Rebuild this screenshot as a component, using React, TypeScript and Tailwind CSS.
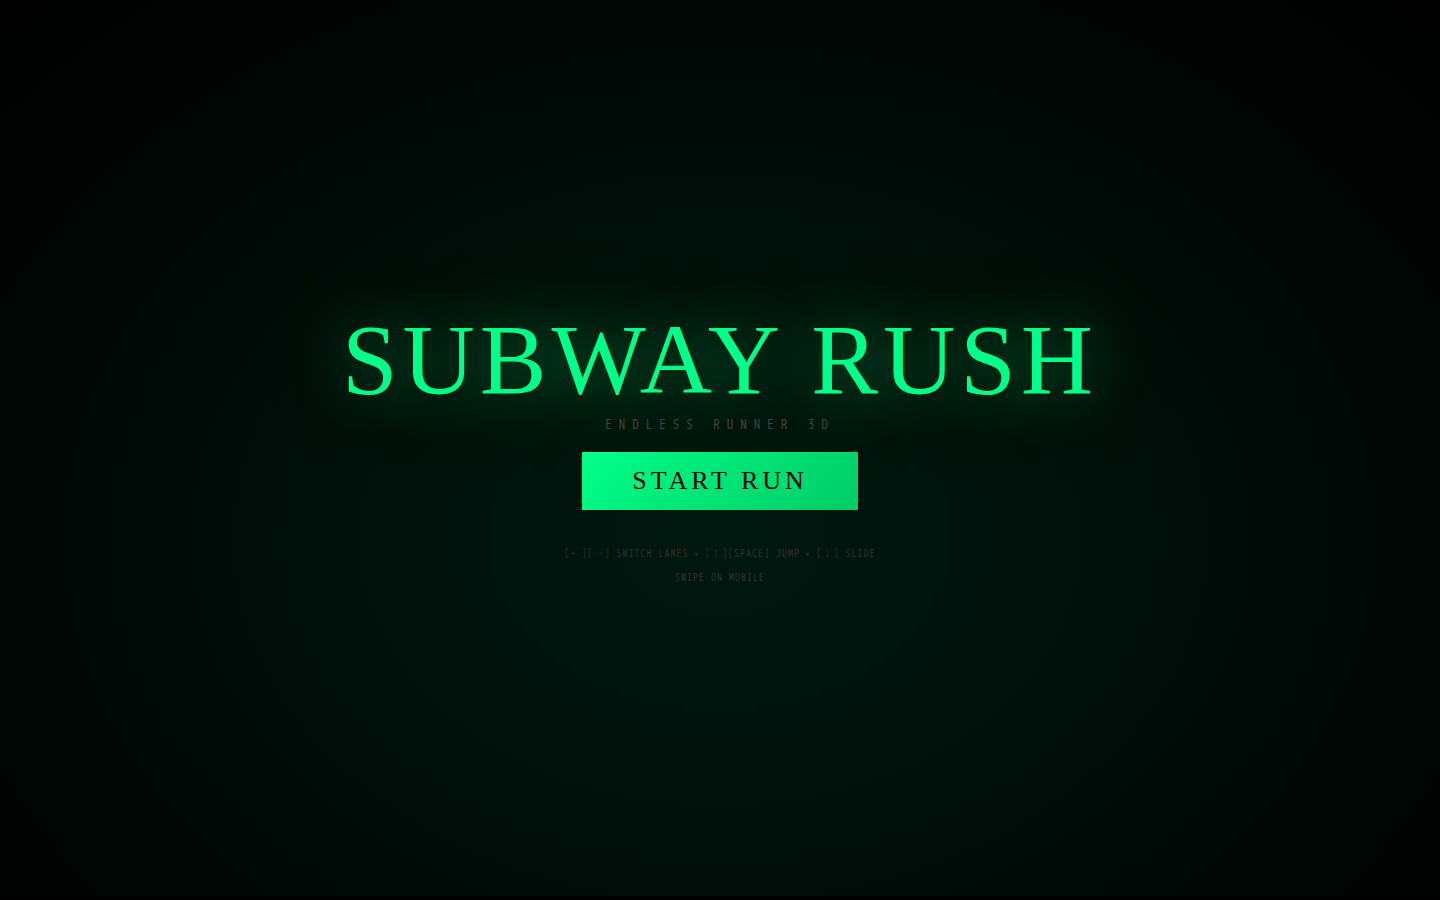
export default function App() {
  return (
    <main className="flex h-screen flex-col bg-black pb-1">
      <div className="flex flex-1 flex-col items-center justify-center bg-[radial-gradient(ellipse_at_50%_60%,#001810_0%,#000_100%)] text-center">
        <h1 className="my-1 font-['Liberation_Serif',serif] text-[100px] leading-[100px] tracking-[5px] text-[#00ff88] [text-shadow:0_0_60px_#00ff8873,0_0_120px_#00ff8840]">
          SUBWAY RUSH
        </h1>
        <p className="mb-4 font-['WenQuanYi_Zen_Hei_Mono','Noto_Sans_Mono_CJK_JP',monospace] text-[13px] leading-[22px] tracking-[7px] text-[#444]">ENDLESS RUNNER 3D</p>
        <button type="button" className="bg-linear-135 from-[#00ff88] to-[#00cc66] px-[50px] py-3.5 font-['Liberation_Serif',serif] text-[26px] leading-[30px] tracking-[4px] text-black">
          START RUN
        </button>
        <p className="mt-8 font-['WenQuanYi_Zen_Hei_Mono','Noto_Sans_Mono_CJK_JP',monospace] text-[10px] leading-6 tracking-[1px] text-[#333]">
          [←][→] SWITCH LANES • [↑][SPACE] JUMP • [↓] SLIDE
          <br />
          SWIPE ON MOBILE
        </p>
      </div>
    </main>
  );
}
